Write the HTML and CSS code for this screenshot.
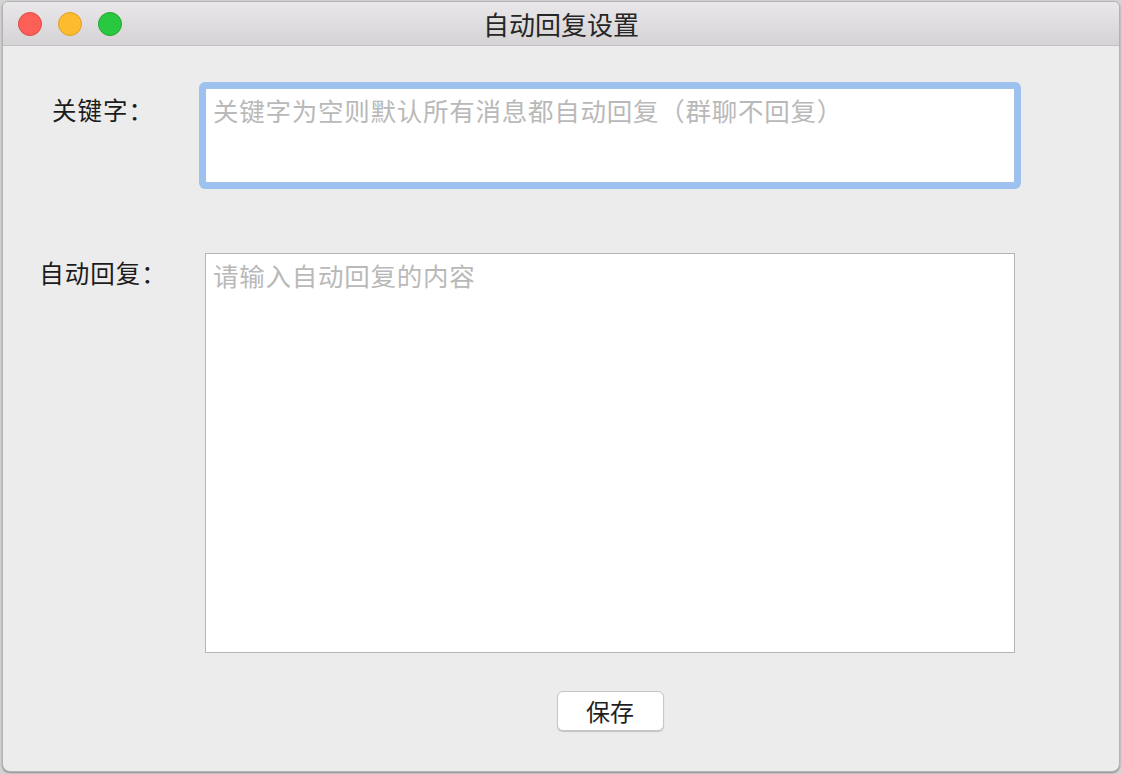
FILE: index.html
```html
<!DOCTYPE html>
<html lang="zh-CN">
<head>
<meta charset="utf-8">
<title>自动回复设置</title>
<link rel="stylesheet" href="styles.css">
</head>
<body>
<div class="window">
  <div class="titlebar">
    <div class="lights">
      <span class="light red"></span>
      <span class="light yellow"></span>
      <span class="light green"></span>
    </div>
    <div class="title">自动回复设置</div>
    <div class="spacer"></div>
  </div>
  <div class="content">
    <div class="form">
      <div class="label">关键字：</div>
      <div class="field keyword focused"><span class="placeholder">关键字为空则默认所有消息都自动回复（群聊不回复）</span></div>
      <div class="label second">自动回复：</div>
      <div class="field reply"><span class="placeholder">请输入自动回复的内容</span></div>
      <div class="actions">
        <button class="btn" type="button">保存</button>
      </div>
    </div>
  </div>
</div>
</body>
</html>
```

FILE: styles.css
```css
* { box-sizing: border-box; }

html, body {
  margin: 0;
  padding: 0;
  width: 1122px;
  height: 774px;
  overflow: hidden;
}

body {
  background: #d4d4d4;
  font-family: "Noto Sans CJK SC", "Noto Sans", sans-serif;
  padding: 1px 2px 2px 2px;
}

.window {
  width: 1118px;
  height: 771px;
  background: #ececec;
  border: 1px solid #b3b3b3;
  border-radius: 6px 6px 8px 8px;
  overflow: hidden;
  display: flex;
  flex-direction: column;
  box-shadow: 0 1px 2px rgba(0,0,0,0.35);
}

.titlebar {
  height: 44px;
  flex: none;
  display: grid;
  grid-template-columns: 1fr auto 1fr;
  align-items: center;
  background: linear-gradient(#e9e7e9, #d5d3d5);
  border-bottom: 1px solid #c2c0c2;
  padding-left: 15px;
}

.lights {
  display: flex;
  gap: 16px;
  align-items: center;
}

.light {
  width: 24px;
  height: 24px;
  border-radius: 50%;
  display: block;
}
.red { background: #fc5f57; border: 1px solid #df4a43; }
.yellow { background: #fdbc2e; border: 1px solid #df9f27; }
.green { background: #2ac840; border: 1px solid #1fa72f; }

.title {
  font-size: 26px;
  color: #262626;
  line-height: 30px;
  padding-right: 15px;
}

.content {
  flex: 1;
  padding: 42px 0 0 20px;
}

.form {
  display: grid;
  grid-template-columns: 160px 810px;
  column-gap: 22px;
  grid-template-rows: 95px 470px auto;
}

.label {
  font-size: 24.5px;
  line-height: 30px;
  color: #1c1c1c;
  text-align: center;
  padding-top: 7px;
  letter-spacing: 1px;
}

.label.second {
  margin-top: 70px;
  padding-top: 5px;
}

.field {
  background: #ffffff;
  border: 1px solid #b5b5b5;
  padding: 6px 7px;
  font-size: 25.5px;
  line-height: 30px;
  letter-spacing: 0.75px;
}

.placeholder { color: #b9b9b9; }

.keyword.focused {
  border-color: #a3c2ea;
  border-radius: 2px;
  box-shadow: 0 0 0 6px #9dc2ef;
}

.reply {
  margin-top: 70px;
  height: 400px;
}

.actions {
  grid-column: 2;
  display: flex;
  justify-content: center;
  padding-top: 38px;
}

.btn {
  width: 107px;
  height: 40px;
  background: #ffffff;
  border: 1px solid #c6c6c6;
  border-radius: 6px;
  box-shadow: 0 1px 1px rgba(0,0,0,0.18);
  font-family: "Noto Sans CJK SC", "Noto Sans", sans-serif;
  font-size: 24px;
  color: #1f1f1f;
  line-height: 30px;
  padding: 0;
}
```
